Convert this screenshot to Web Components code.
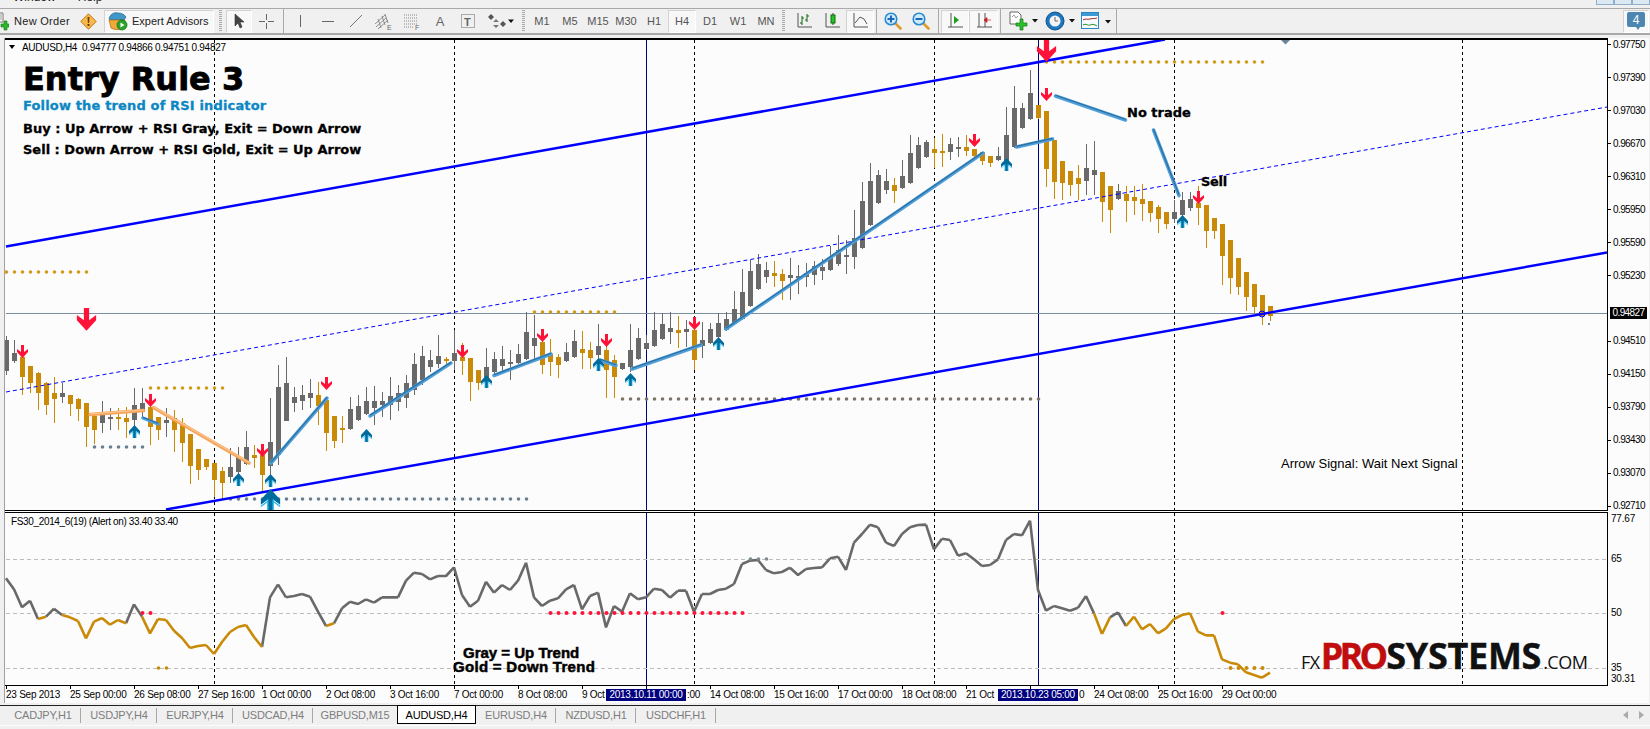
<!DOCTYPE html>
<html>
<head>
<meta charset="utf-8">
<title>AUDUSD,H4</title>
<style>
    html, body { margin: 0; padding: 0; height: 100%; overflow: hidden; background: #f0f0f0; }
</style>
</head>
<body>
<mt-app>
    <menu-strip></menu-strip>
    <tool-bar>
        <tool-btn style="width:76px;justify-content:flex-start;color:#222;letter-spacing:.3px">
            <svg width="12" height="20" viewBox="0 0 12 20" style="margin-right:5px;margin-left:-3px"><path d="M0 2h6v9H0z" fill="#fff" stroke="#777"/><path d="M1 4h4M1 6h4M1 8h4" stroke="#999"/><path d="M4 13h3v-3h3v3h2v3h-2v3H7v-3H4z" fill="#2db52d" stroke="#137a13" stroke-width=".6"/></svg>New Order
        </tool-btn>
        <tool-btn style="width:24px">
            <svg width="17" height="17" viewBox="0 0 17 17"><path d="M8.500 .8 16.200 8.500 8.500 16.200 .8 8.500z" fill="#f8b84a" stroke="#b97a12"/><path d="M7.500 4h2l-.4 6H7.900z" fill="#6a3c00"/><rect x="7.500" y="11" width="2" height="2" fill="#6a3c00"/></svg>
        </tool-btn>
        <tool-gap style="width:4px"></tool-gap>
        <tool-btn pressed style="width:110px;justify-content:flex-start;padding-left:3px;color:#222">
            <svg width="20" height="20" viewBox="0 0 20 20" style="margin-right:4px"><path d="M1 8c1-5 5-7 9-6 3 0 6 1 8 4l-2 3H3z" fill="#3f97c9" stroke="#1c628d" stroke-width=".7"/><path d="M1 9h16l-2 8c-3 2-9 2-12 0z" fill="#f3a93a" stroke="#a86c11" stroke-width=".7"/><circle cx="14" cy="14" r="5" fill="#2aa52a" stroke="#0f6d0f" stroke-width=".7"/><path d="M12.500 11.500v5l4-2.500z" fill="#fff"/></svg>Expert Advisors
        </tool-btn>
        <tool-gap style="width:4px"></tool-gap><tool-grip></tool-grip><tool-gap style="width:2px"></tool-gap>
        <tool-btn pressed style="width:26px"><svg width="12" height="17" viewBox="0 0 12 17"><path d="M2 1v12l3-3 2 5 2-1-2-5h4z" fill="#444" stroke="#333" stroke-width=".6"/></svg></tool-btn>
        <tool-btn style="width:28px"><svg width="17" height="17" viewBox="0 0 17 17"><path d="M8.500 1v6M8.500 10v6M1 8.500h6M10 8.500h6" stroke="#666"/></svg></tool-btn>
        <tool-sep style="width:6px"></tool-sep>
        <tool-btn style="width:28px"><svg width="16" height="16" viewBox="0 0 16 16"><path d="M8.500 2v12" stroke="#666"/></svg></tool-btn>
        <tool-btn style="width:28px"><svg width="16" height="16" viewBox="0 0 16 16"><path d="M2 8.500h12" stroke="#666"/></svg></tool-btn>
        <tool-btn style="width:28px"><svg width="16" height="16" viewBox="0 0 16 16"><path d="M2 14 14 2" stroke="#777"/></svg></tool-btn>
        <tool-btn style="width:28px"><svg width="20" height="19" viewBox="0 0 20 19"><path d="M1 12 11 3M2 15 12 6M4 17 14 8M4 7l3 9M8 4l3 9M11 2l3 9" stroke="#777" stroke-width=".8" fill="none"/><text x="13" y="18" font-family="Liberation Sans" font-size="7" fill="#666">E</text></svg></tool-btn>
        <tool-btn style="width:28px"><svg width="20" height="19" viewBox="0 0 20 19"><path d="M2 3h13M2 6h13M2 9h13M2 12h13M2 15h9" stroke="#888" stroke-dasharray="1 1"/><text x="13" y="18" font-family="Liberation Sans" font-size="7" fill="#666">F</text></svg></tool-btn>
        <tool-btn style="width:28px;font-size:13px;color:#666">A</tool-btn>
        <tool-btn style="width:28px"><svg width="16" height="16" viewBox="0 0 16 16"><rect x="1.500" y="1.500" width="13" height="13" fill="none" stroke="#666" stroke-dasharray="1 1"/><text x="4" y="12.500" font-family="Liberation Sans" font-size="11" font-weight="bold" fill="#666">T</text></svg></tool-btn>
        <tool-btn style="width:36px;justify-content:flex-start;padding-left:6px"><svg width="26" height="16" viewBox="0 0 26 16"><path d="M3 1 6 4 3 7 0 4z" fill="#555"/><path d="M5 9l3-3 3 3zM8 15 5 12h6z" fill="#777"/><path d="M12 11l3 3 3-3-3-3z" fill="#555"/><path d="M20 6.500h6L23 10z" fill="#111"/></svg></tool-btn>
        <tool-gap style="width:3px"></tool-gap><tool-grip></tool-grip><tool-gap style="width:1px"></tool-gap>
        <tool-btn style="width:28px">M1</tool-btn>
        <tool-btn style="width:28px">M5</tool-btn>
        <tool-btn style="width:28px">M15</tool-btn>
        <tool-btn style="width:28px">M30</tool-btn>
        <tool-btn style="width:28px">H1</tool-btn>
        <tool-btn pressed style="width:28px">H4</tool-btn>
        <tool-btn style="width:28px">D1</tool-btn>
        <tool-btn style="width:28px">W1</tool-btn>
        <tool-btn style="width:28px">MN</tool-btn>
        <tool-gap style="width:1px"></tool-gap><tool-grip></tool-grip><tool-gap style="width:3px"></tool-gap>
        <tool-btn style="width:28px"><svg width="18" height="18" viewBox="0 0 18 18"><path d="M3 1v14h14" fill="none" stroke="#555"/><path d="M7 4v9M5 11h2M7 6h2M12 2v8M10 8h2M12 4h2" stroke="#116611" fill="none"/></svg></tool-btn>
        <tool-btn style="width:28px"><svg width="18" height="18" viewBox="0 0 18 18"><path d="M3 1v14h14" fill="none" stroke="#555"/><path d="M10 1v12" stroke="#333"/><rect x="8" y="3" width="4" height="8" fill="#24c424" stroke="#0c6a0c"/></svg></tool-btn>
        <tool-btn pressed style="width:28px"><svg width="18" height="18" viewBox="0 0 18 18"><path d="M3 1v14h14" fill="none" stroke="#555"/><path d="M4 11 9 5l4 2 3 5" fill="none" stroke="#555"/></svg></tool-btn>
        <tool-sep style="width:5px"></tool-sep>
        <tool-btn style="width:28px"><mag-icon></mag-icon></tool-btn>
        <tool-btn style="width:28px"><mag-icon minus></mag-icon></tool-btn>
        <tool-sep style="width:6px"></tool-sep>
        <tool-btn pressed style="width:28px"><svg width="18" height="18" viewBox="0 0 18 18"><path d="M5 1v14h12M2 15h3" fill="none" stroke="#555"/><path d="M8 4v8l5-4z" fill="#1ea01e"/></svg></tool-btn>
        <tool-btn pressed style="width:29px"><svg width="18" height="18" viewBox="0 0 18 18"><path d="M4 1v14h13M2 15h2M10 1v14" fill="none" stroke="#555"/><path d="M16 8H12M12 5.500v5l-3-2.500z" fill="#c81e1e" stroke="#c81e1e" stroke-width=".7"/></svg></tool-btn>
        <tool-sep style="width:5px"></tool-sep>
        <tool-btn style="width:37px;justify-content:flex-start;padding-left:6px"><svg width="30" height="20" viewBox="0 0 30 20"><path d="M1 1h8l3 3v9H1z" fill="#fff" stroke="#666"/><path d="M3 6l2-2 2 3 2-2" fill="none" stroke="#999"/><path d="M7 12h4V8h3v4h4v3h-4v4h-3v-4H7z" fill="#2dc12d" stroke="#0f7a0f" stroke-width=".7"/><path d="M23 8h6l-3 3.500z" fill="#111"/></svg></tool-btn>
        <tool-btn style="width:37px;justify-content:flex-start;padding-left:5px"><svg width="31" height="20" viewBox="0 0 31 20"><circle cx="10" cy="10" r="9" fill="#1f78bf" stroke="#0d4f86"/><circle cx="10" cy="10" r="5.500" fill="#f4f4f4"/><path d="M10 6v4h3" fill="none" stroke="#666"/><path d="M24 8h6l-3 3.500z" fill="#111"/></svg></tool-btn>
        <tool-btn style="width:36px;justify-content:flex-start;padding-left:4px"><svg width="32" height="18" viewBox="0 0 32 18"><rect x=".5" y=".5" width="17" height="16" fill="#f7fbff" stroke="#2a85c0"/><rect x="1" y="1" width="16" height="3" fill="#3d9ad2"/><path d="M2 8c3-2 4 0 7-1s4 0 7-1" fill="none" stroke="#a32a1c"/><path d="M2 13c3-2 5 1 7 0s4-1 7 1" fill="none" stroke="#1f8c1f"/><path d="M24 8h6l-3 3.500z" fill="#111"/></svg></tool-btn>
        <tool-sep style="width:6px"></tool-sep>
        <tool-gap style="flex:1"></tool-gap>
        <tool-btn pressed style="width:26px"><svg width="20" height="20" viewBox="0 0 20 20"><path d="M3 1h14a2 2 0 0 1 2 2v11a2 2 0 0 1-2 2h-3l-2 3-2-3H3a2 2 0 0 1-2-2V3a2 2 0 0 1 2-2z" fill="#4d86b0"/><text x="10" y="13" text-anchor="middle" font-family="Liberation Sans" font-size="12" fill="#fff">4</text></svg></tool-btn>
        <tool-gap style="width:1px"></tool-gap>
    </tool-bar>
    <chart-window>
        <price-pane slot="main">
            <chart-note style="left:17px;top:2px;font:10px 'Liberation Sans',sans-serif;letter-spacing:-.3px">AUDUSD,H4&nbsp; 0.94777 0.94866 0.94751 0.94827</chart-note>
            <chart-note style="left:18px;top:20px;font:bold 32px 'DejaVu Sans',sans-serif;-webkit-text-stroke:.8px #000">Entry Rule 3</chart-note>
            <chart-note style="left:18px;top:58px;font:bold 13px 'DejaVu Sans',sans-serif;color:#0c87c4;-webkit-text-stroke:.3px #0c87c4;letter-spacing:.15px">Follow the trend of RSI indicator</chart-note>
            <chart-note style="left:18px;top:81px;font:bold 13px 'DejaVu Sans',sans-serif;-webkit-text-stroke:.3px #000">Buy : Up Arrow + RSI Gray, Exit = Down Arrow</chart-note>
            <chart-note style="left:18px;top:102px;font:bold 13px 'DejaVu Sans',sans-serif;-webkit-text-stroke:.3px #000">Sell : Down Arrow + RSI Gold, Exit = Up Arrow</chart-note>
            <chart-note style="left:1122px;top:65px;font:bold 13px 'DejaVu Sans',sans-serif;-webkit-text-stroke:.3px #000">No trade</chart-note>
            <chart-note style="left:1196px;top:134px;font:bold 13px 'DejaVu Sans',sans-serif;-webkit-text-stroke:.3px #000;letter-spacing:-.3px">Sell</chart-note>
            <chart-note style="left:1276px;top:416px;font:13px 'Liberation Sans',sans-serif">Arrow Signal: Wait Next Signal</chart-note>
        </price-pane>
        <price-axis slot="main-axis"></price-axis>
        <indicator-pane slot="sub">
            <chart-note style="left:6px;top:3px;font:10px 'Liberation Sans',sans-serif;letter-spacing:-.35px">FS30_2014_6(19) (Alert on) 33.40 33.40</chart-note>
            <chart-note style="left:458px;top:131px;font:bold 15px 'Liberation Sans',sans-serif;-webkit-text-stroke:.5px #000">Gray = Up Trend</chart-note>
            <chart-note style="left:448px;top:145px;font:bold 15px 'Liberation Sans',sans-serif;-webkit-text-stroke:.5px #000;letter-spacing:.3px">Gold = Down Trend</chart-note>
            <fx-logo></fx-logo>
        </indicator-pane>
        <indicator-axis slot="sub-axis"></indicator-axis>
        <time-axis slot="time"></time-axis>
    </chart-window>
    <chart-tabs>
        <chart-tab style="width:76px">CADJPY,H1</chart-tab>
        <chart-tab style="width:76px">USDJPY,H4</chart-tab>
        <chart-tab style="width:76px">EURJPY,H4</chart-tab>
        <chart-tab style="width:80px">USDCAD,H4</chart-tab>
        <chart-tab style="width:84px" last>GBPUSD,M15</chart-tab>
        <chart-tab style="width:79px" active>AUDUSD,H4</chart-tab>
        <chart-tab style="width:80px">EURUSD,H4</chart-tab>
        <chart-tab style="width:80px">NZDUSD,H1</chart-tab>
        <chart-tab style="width:80px">USDCHF,H1</chart-tab>
    </chart-tabs>
</mt-app>

<script>
// page coordinates are used for all chart data, each svg viewBox maps them back
const GRAY = '#696969', GOLD = '#c98a08', RED = '#ff1238', TEAL = '#006c9e';

// [colour, body top, body bottom, high, low], one per bar, bar k sits at x = 6 + 8k
const BARS = `g340,371,336,375 g353,361,340,363 o357,377,355,395 o366,383,366,393 o373,393,372,410 o383,405,382,415
o393,399,377,423 g393,397,383,403 o395,404,395,416 o399,409,398,421 o403,427,403,447 o416,430,414,444
g415,423,401,433 g417,419,408,430 o417,419,408,430 o418,422,407,438 g405,420,388,430 g403,412,388,418
o407,427,402,445 o417,430,417,440 g420,423,408,437 o418,430,410,452 o423,443,418,462 o434,466,434,484
o449,470,449,480 o459,467,459,470 o463,480,463,497 o471,483,467,500 g467,477,448,483 g457,472,447,483
g447,464,431,465 o455,458,445,468 o455,475,445,492 g442,466,398,483 g387,455,365,465 g383,421,357,421
g397,403,387,412 g395,401,385,410 g393,398,379,408 o395,406,382,425 o400,433,398,451 o416,441,416,448
o428,429,416,443 g409,429,397,430 g406,420,395,421 g401,414,387,415 g401,408,386,425 g401,405,392,417
g396,405,377,420 g393,402,385,411 g383,398,375,408 g364,390,353,395 g356,380,346,385 g360,367,350,372
g356,364,335,368 o359,361,357,366 g353,361,330,370 o357,361,343,375 o358,382,358,401 o370,383,370,390
g367,382,348,387 g359,372,352,375 g359,366,346,372 g362,363,350,380 g354,363,344,364 g332,359,312,360
g338,346,315,359 o342,365,337,374 o354,362,339,376 o357,365,354,378 g352,361,343,362 g341,357,330,358
o349,353,331,369 o350,358,342,369 g346,355,324,371 o350,370,338,398 o360,377,355,398 g363,369,363,370
g350,367,324,372 g338,359,328,360 g343,349,335,350 g330,346,312,347 g324,339,313,340 g328,332,312,344
o330,333,316,348 g329,332,320,347 o330,360,320,370 g340,346,322,358 g329,343,323,344 g323,337,313,345
g319,330,312,331 g309,324,291,325 g292,319,269,320 g271,306,260,307 g264,289,254,290 g270,277,262,283
o273,276,261,287 o274,281,269,300 g275,278,258,300 g276,277,265,294 g273,277,263,287 g266,275,261,285
g267,271,259,280 g257,270,246,271 g250,264,235,266 g255,257,240,274 g238,257,210,269 g201,248,182,249
g181,225,163,226 g175,203,170,204 g181,190,169,194 o185,191,178,203 g176,188,160,189 g153,183,135,184
g145,168,137,169 g142,157,140,158 o149,153,138,168 o151,152,134,167 g144,152,138,160 g147,148,137,157
o147,151,135,156 o149,156,149,159 o152,161,152,165 o156,163,156,167 g156,160,147,161 g135,165,107,170
g108,147,86,148 g108,128,103,129 g93,119,70,120 o105,118,105,119 o111,169,111,187 o140,182,140,199
o161,183,161,200 o171,185,171,196 o178,184,165,200 g168,181,144,195 g170,175,141,195 o172,202,172,222
o186,210,186,233 g191,199,184,200 o194,201,186,222 o197,201,186,215 o199,204,184,221 o201,213,201,222
o207,219,205,233 o212,224,212,229 g212,219,200,223 g200,215,192,216 g199,208,192,211 o203,208,186,225
o205,231,205,248 o218,231,218,239 o224,256,224,285 o240,278,240,294 o258,287,258,295 o272,297,272,311
o284,307,284,313 o295,316,295,325 o306,316,306,321`.trim().split(/\s+/).map(s => {
    const [t, b, h, l] = s.slice(1).split(',').map(Number);
    return { col: s[0] === 'g' ? GRAY : GOLD, t, b, h, l };
});

// FS30 values as read off the pane, y = 510 + v / 3
const FS = [205,238,292,272,327,320,296,315,322,333,385,335,324,344,330,340,283,320,370,327,330,362,384,414,408,405,432,396,366,351,345,381,411,
    262,223,262,258,252,260,305,348,340,295,275,282,268,278,262,262,262,212,188,192,208,198,198,172,255,290,272,215,248,225,240,212,158,
    262,288,272,265,238,225,298,258,248,352,288,305,250,268,262,236,240,263,242,242,305,252,252,240,236,222,162,152,150,180,190,186,173,195,177,174,172,145,140,180,98,72,44,52,98,108,72,52,45,44,118,86,90,137,130,148,168,165,148,90,72,76,32,240,
    302,288,295,302,293,258,310,372,322,307,348,320,358,342,370,355,327,315,310,365,376,376,448,458,463,487,495,503,488];
const FS_GOLD = [[4,5],[7,15],[17,32],[40,41],[136,138],[140,158]];

const barX = k => 6 + 8 * k;
const seg = (x1, y1, x2, y2, col, w, extra = '') => `<line x1="${x1}" y1="${y1}" x2="${x2}" y2="${y2}" stroke="${col}" stroke-width="${w}" ${extra}/>`;

function vLines(top, bottom) {
    let s = '';
    [214, 454, 694, 934, 1174, 1462].forEach(x => { s += seg(x + .5, top, x + .5, bottom, '#000', 1, 'stroke-dasharray="3 3"'); });
    [646, 1038].forEach(x => { s += seg(x + .5, top, x + .5, bottom, '#000080', 1); });
    return s;
}

function dots(from, to, y, col, r = 1.8) {
    let s = '';
    for (let x = from; x <= to; x += 8) s += `<circle cx="${x + .5}" cy="${y}" r="${r}" fill="${col}"/>`;
    return s;
}

// wingdings style arrow, cx/top in page px
function arrow(cx, top, down, col, k = 1, tail = '') {
    const pts = '-5.500,4 -1.500,7 -1.500,0 1.500,0 1.500,7 5.500,4 5.500,7 0,13 -5.500,7';
    const tf = down ? `translate(${cx + .5} ${top}) scale(${k})` : `translate(${cx + .5} ${top + 13 * k}) scale(${k} ${-k})`;
    return `<g transform="${tf}"><polygon points="${pts}" fill="${col}"/>${tail}</g>`;
}
const upTail = '<path d="M-1.500 0v7M1.500 0v7" stroke="#22b6e6" stroke-width=".8"/><path d="M-5.500 4l4 3M5.500 4l-4 3" stroke="#22b6e6" stroke-width=".7" transform="translate(0 -1)"/>';

function trend(x1, y1, x2, y2, col = '#4f9fdb', dark = '#2b6f9e') {
    return seg(x1, y1, x2, y2, col, 3.500, 'stroke-linecap="round"') + seg(x1, y1 - .7, x2, y2 - .7, dark, 1.200);
}

class MtApp extends HTMLElement {
    constructor() {
        super();
        this.attachShadow({ mode: 'open' }).innerHTML = `
            <style>
                :host { display: flex; flex-direction: column; width: 1650px; height: 729px; overflow: hidden;
                    background: #f0f0f0; font-family: 'Liberation Sans', sans-serif; }
            </style>
            <slot></slot>`;
    }
}

class MenuStrip extends HTMLElement {
    constructor() {
        super();
        this.attachShadow({ mode: 'open' }).innerHTML = `
            <style>
                :host { display: flex; flex: none; height: 8px; overflow: hidden; position: relative; background: #f0f0f0; }
                div { display: flex; gap: 22px; margin: -10px 0 0 13px; font: 12px/14px 'Liberation Sans', sans-serif; color: #222; }
                .win { position: absolute; right: 0; top: -5px; display: flex; }
                .win i { width: 18px; height: 10px; box-sizing: border-box; border: 1px solid #8fb0cc; background: #dce8f2; }
            </style>
            <div><span>Window</span><span>Help</span></div>
            <span class="win"><i></i><i></i><i></i></span>`;
    }
}

class ToolBar extends HTMLElement {
    constructor() {
        super();
        this.attachShadow({ mode: 'open' }).innerHTML = `
            <style>
                :host { display: flex; flex: none; align-items: center; height: 24px; margin-bottom: 3px; background: #f0f0f0;
                    border-top: 1px solid #a9a9a9; border-bottom: 2px solid #a9a9a9; }
            </style>
            <slot></slot>`;
    }
}

class ToolBtn extends HTMLElement {
    constructor() {
        super();
        this.attachShadow({ mode: 'open' }).innerHTML = `
            <style>
                :host { display: flex; flex: none; align-items: center; justify-content: center; box-sizing: border-box; height: 23px;
                    font: 11px 'Liberation Sans', sans-serif; color: #555; white-space: nowrap; }
                :host([pressed]) { background: #f8f8f8; border: 1px solid #d2d2d2; border-right-color: #fff; border-bottom-color: #fff; }
            </style>
            <slot></slot>`;
    }
}

class ToolGap extends HTMLElement {
    constructor() {
        super();
        this.attachShadow({ mode: 'open' }).innerHTML = `<style>:host { display: block; flex: none; }</style>`;
    }
}

class ToolSep extends HTMLElement {
    constructor() {
        super();
        this.attachShadow({ mode: 'open' }).innerHTML = `
            <style>
                :host { display: flex; flex: none; justify-content: center; height: 24px; }
                i { width: 1px; background: #a9a9a9; }
            </style><i></i>`;
    }
}

class ToolGrip extends HTMLElement {
    constructor() {
        super();
        this.attachShadow({ mode: 'open' }).innerHTML = `
            <style>
                :host { display: block; flex: none; width: 6px; height: 22px;
                    background: repeating-linear-gradient(to bottom, #a9a9a9 0 1px, transparent 1px 2px) 1px 0 / 3px 100% no-repeat; }
            </style>`;
    }
}

class MagIcon extends HTMLElement {
    constructor() {
        super();
        const sign = this.hasAttribute('minus') ? '' : '<path d="M7 3.500v7" stroke="#1668c0" stroke-width="2"/>';
        this.attachShadow({ mode: 'open' }).innerHTML = `
            <style>:host { display: block; width: 18px; height: 18px; } svg { display: block; }</style>
            <svg width="18" height="18" viewBox="0 0 18 18">
                <path d="M11 11l5.500 5.500" stroke="#e09a2c" stroke-width="2.600" stroke-linecap="round"/>
                <circle cx="7" cy="7" r="5.800" fill="#cfeafa" stroke="#2a8bd0" stroke-width="1.600"/>
                <path d="M3.500 7h7" stroke="#1668c0" stroke-width="2"/>${sign}
            </svg>`;
    }
}

class ChartWindow extends HTMLElement {
    constructor() {
        super();
        this.attachShadow({ mode: 'open' }).innerHTML = `
            <style>
                :host { display: grid; flex: none; margin: 0 1px 2px 4px; background: #fcfcfc; border-left: 1px solid #a0a0a0;
                    grid-template-columns: 1603px 1fr; grid-template-rows: 473px 174px 16px; row-gap: 1px; }
                ::slotted([slot="time"]) { grid-column: 1 / 3; margin-top: -1px; }
            </style>
            <slot name="main"></slot><slot name="main-axis"></slot>
            <slot name="sub"></slot><slot name="sub-axis"></slot>
            <slot name="time"></slot>`;
    }
}

class PricePane extends HTMLElement {
    constructor() {
        super();
        let s = vLines(40, 510);

        s += seg(6, 313.500, 1607, 313.500, '#7a8ea0', 1);
        s += dots(6, 86, 272, '#d29a18') + dots(150, 222, 388, '#d29a18') + dots(534, 614, 312, '#d29a18') + dots(1046, 1262, 62, '#d29a18');
        s += dots(94, 142, 447, '#6b7f8e') + dots(230, 526, 499, '#6b7f8e') + dots(622, 1038, 399, '#7b7468');
        s += `<path d="M1281 40h9l-4.500 4.500z" fill="#6b8497"/>`;

        // candles
        BARS.forEach((b, k) => {
            const x = barX(k);
            s += `<rect x="${x}" y="${b.h}" width="1" height="${b.l - b.h}" fill="${b.col}" shape-rendering="crispEdges"/>`;
            s += `<rect x="${x - 2}" y="${b.t}" width="5" height="${Math.max(b.b - b.t, 2)}" fill="${b.col}" shape-rendering="crispEdges"/>`;
        });

        // regression channel
        s += seg(6, 246.500, 1165, 39.500, '#0000ff', 2.500);
        s += seg(166, 509.500, 1607, 252.500, '#0000ff', 2.500);
        s += seg(6, 392, 1607, 107, '#0000ff', 1, 'stroke-dasharray="4 3"');
        s += `<circle cx="1262" cy="314" r="3" fill="none" stroke="#0000ff"/><rect x="1268" y="323" width="2" height="2" fill="#6b7f8e"/>`;

        // hand drawn trend lines
        s += trend(90, 414.500, 143.500, 410.500, '#f6a55a', '#fbc58f') + trend(153.500, 407.500, 249, 463, '#f6a55a', '#fbc58f');
        [[143, 418, 158, 424], [271, 463, 327, 398], [370, 416, 451, 363], [494, 375.500, 551, 354], [600, 360, 616, 365.500],
            [632, 369, 701, 345], [726, 329, 983, 153], [1016.500, 147, 1052.500, 139], [1055.500, 96, 1125.500, 120], [1153.500, 130, 1179, 195.500]]
            .forEach(t => { s += trend(...t); });

        // signals
        [[22, 345], [150, 394], [262, 444], [326, 377], [462, 345], [542, 329], [606, 334], [694, 317], [974, 134], [1046, 88], [1198, 191]]
            .forEach(([x, y]) => { s += arrow(x, y, true, RED); });
        s += arrow(86, 308, true, RED, 1.750) + arrow(1046, 39, true, RED, 1.750);
        [[134, 425], [238, 473], [270, 474], [366, 429], [486, 375], [598, 358], [630, 373], [718, 337], [1006, 158], [1182, 215]]
            .forEach(([x, y]) => { s += arrow(x, y, false, TEAL, 1, upTail); });
        s += arrow(270, 489, false, TEAL, 1.750, upTail);

        this.attachShadow({ mode: 'open' }).innerHTML = `
            <style>
                :host { display: block; position: relative; box-sizing: border-box; overflow: hidden; background: #fcfcfc; font-size: 10px;
                    border-top: 2px solid #000; border-bottom: 1px solid #000; border-right: 1px solid #000; }
                svg { display: block; }
                .tri { position: absolute; left: 4px; top: 5px; width: 0; height: 0; border: 3.500px solid transparent; border-top: 4px solid #000; border-bottom: 0; }
            </style>
            <svg width="1602" height="470" viewBox="5 40 1602 470">${s}</svg>
            <i class="tri"></i>
            <slot></slot>`;
    }
}

class IndicatorPane extends HTMLElement {
    constructor() {
        super();
        let s = vLines(513, 685);
        [559.500, 613.500, 668.500].forEach(y => { s += seg(6, y, 1607, y, '#bdbdbd', 1, 'stroke-dasharray="4 3"'); });

        const isGold = k => FS_GOLD.some(([a, b]) => k >= a && k < b);
        let gray = '', gold = '';
        for (let k = 0; k < FS.length - 1; k++) {
            const p = `M${barX(k)} ${510 + FS[k] / 3}L${barX(k + 1)} ${510 + FS[k + 1] / 3}`;
            if (isGold(k)) gold += p; else gray += p;
        }
        s += `<path d="${gray}" fill="none" stroke="${GRAY}" stroke-width="2.600" stroke-linejoin="round"/>`;
        s += `<path d="${gold}" fill="none" stroke="${GOLD}" stroke-width="2.600" stroke-linejoin="round"/>`;

        s += dots(142, 150, 613, '#ff1238', 2) + dots(550, 742, 613, '#ff1238', 2) + dots(1222, 1222, 613, '#ff1238', 2);
        s += dots(750, 766, 559, '#7d8a90') + dots(158, 166, 668, GOLD) + dots(1230, 1262, 668, GOLD, 2);

        this.attachShadow({ mode: 'open' }).innerHTML = `
            <style>
                :host { display: block; position: relative; box-sizing: border-box; overflow: hidden; background: #fcfcfc; font-size: 10px;
                    border-top: 1px solid #000; border-bottom: 1px solid #000; border-right: 1px solid #000; }
                svg { display: block; }
            </style>
            <svg width="1602" height="172" viewBox="5 513 1602 172">${s}</svg>
            <slot></slot>`;
    }
}

class ChartNote extends HTMLElement {
    constructor() {
        super();
        this.attachShadow({ mode: 'open' }).innerHTML = `
            <style>:host { position: absolute; white-space: nowrap; color: #000; line-height: 1.2; }</style>
            <slot></slot>`;
    }
}

class FxLogo extends HTMLElement {
    constructor() {
        super();
        this.attachShadow({ mode: 'open' }).innerHTML = `
            <style>
                :host { position: absolute; left: 1296px; top: 123px; display: flex; align-items: baseline; color: #111;
                    font-family: 'Open Sans', sans-serif; white-space: nowrap; line-height: 40px; }
                .fx, .com { font-size: 18px; font-weight: 400; letter-spacing: -.5px; }
                .big { font-size: 36px; font-weight: 700; letter-spacing: -.3px; -webkit-text-stroke: .4px #111; }
                .pro { color: #c00d0d; margin-left: 1px; letter-spacing: -3.800px; -webkit-text-stroke: .4px #c00d0d; margin-right: 2px; }
                .com { margin-left: 2px; }
            </style>
            <span class="fx">FX</span><span class="big pro">PRO</span><span class="big">SYSTEMS</span><span class="com">.COM</span>`;
    }
}

class PriceAxis extends HTMLElement {
    constructor() {
        super();
        const labels = ['0.97750', '0.97390', '0.97030', '0.96670', '0.96310', '0.95950', '0.95590', '0.95230', '0.94870',
            '0.94510', '0.94150', '0.93790', '0.93430', '0.93070', '0.92710'];
        const rows = labels.map(l => `<div class="row${l === '0.94870' ? ' hid' : ''}"><i></i><span>${l === '0.94870' ? '' : l}</span></div>`).join('');
        this.attachShadow({ mode: 'open' }).innerHTML = `
            <style>
                :host { display: flex; flex-direction: column; position: relative; overflow: hidden; background: #fcfcfc;
                    font: 10px/10px 'Liberation Sans', sans-serif; letter-spacing: -.6px; color: #000; }
                .row { display: flex; flex: none; align-items: center; height: 32.950px; gap: 2px; }
                .row:first-of-type { margin-top: -9.500px; }
                i { width: 3px; height: 1px; background: #000; }
                .hid i { background: none; }
                .tag { position: absolute; left: 2px; top: 269px; width: 37px; height: 12px; line-height: 12px; text-align: center; background: #000; color: #fff; }
            </style>
            ${rows}
            <div class="tag">0.94827</div>`;
    }
}

class IndicatorAxis extends HTMLElement {
    constructor() {
        super();
        const rows = [['77.67', 1], ['65', 41], ['50', 95], ['35', 150], ['30.31', 161]];
        this.attachShadow({ mode: 'open' }).innerHTML = `
            <style>
                :host { display: block; position: relative; background: #fcfcfc; font: 10px 'Liberation Sans', sans-serif; letter-spacing: -.2px; color: #000; }
                span { position: absolute; left: 3px; line-height: 12px; }
            </style>
            ${rows.map(([t, y]) => `<span style="top:${y}px">${t}</span>`).join('')}`;
    }
}

class TimeAxis extends HTMLElement {
    constructor() {
        super();
        // the crosshair date boxes sit over parts of these labels, only the visible parts are kept
        const labels = ['23 Sep 2013', '25 Sep 00:00', '26 Sep 08:00', '27 Sep 16:00', '1 Oct 00:00', '2 Oct 08:00', '3 Oct 16:00', '7 Oct 00:00',
            '8 Oct 08:00', '9 Oct', '<b style="padding-left:41px">:00</b>', '14 Oct 08:00', '15 Oct 16:00', '17 Oct 00:00', '18 Oct 08:00', '21 Oct',
            '<b style="padding-left:49px">0</b>', '24 Oct 08:00', '25 Oct 16:00', '29 Oct 00:00'];
        this.attachShadow({ mode: 'open' }).innerHTML = `
            <style>
                :host { display: flex; position: relative; overflow: hidden; padding-left: 1px; background: #fcfcfc;
                    font: 10px 'Liberation Sans', sans-serif; letter-spacing: -.25px; color: #000; }
                div { flex: none; width: 64px; box-sizing: border-box; height: 100%; position: relative; padding: 3px 0 0 0; line-height: 11px; white-space: nowrap; }
                div::before { content: ''; position: absolute; left: 0; top: 0; width: 1px; height: 3px; background: #000; }
                b { font-weight: 400; }
                .sel { position: absolute; top: 3px; width: 80px; height: 12px; line-height: 12px; text-align: center; background: #000080; color: #fff; }
            </style>
            ${labels.map(l => `<div>${l}</div>`).join('')}
            <span class="sel" style="left:601px">2013.10.11 00:00</span>
            <span class="sel" style="left:993px">2013.10.23 05:00</span>`;
    }
}

class ChartTabs extends HTMLElement {
    constructor() {
        super();
        this.attachShadow({ mode: 'open' }).innerHTML = `
            <style>
                :host { display: flex; flex: none; position: relative; height: 19px; padding-left: 5px; background: #f0f0f0;
                    border-top: 1px solid #222; border-bottom: 1px solid #fbfbfb; }
                .nav { position: absolute; right: 6px; top: 5px; display: flex; gap: 11px; }
                .nav i { width: 0; height: 0; border: 4px solid transparent; }
                .nav i:first-child { border-right: 5px solid #aaa; border-left: 0; }
                .nav i:last-child { border-left: 5px solid #aaa; border-right: 0; }
            </style>
            <slot></slot>
            <span class="nav"><i></i><i></i></span>`;
    }
}

class ChartTab extends HTMLElement {
    constructor() {
        super();
        this.attachShadow({ mode: 'open' }).innerHTML = `
            <style>
                :host { display: flex; flex: none; align-items: center; justify-content: center; box-sizing: border-box; height: 18px; margin-top: 0;
                    font: 11px 'Liberation Sans', sans-serif; letter-spacing: -.2px; color: #7d7d7d; white-space: nowrap; position: relative; }
                :host(:not([active]):not([last]))::after { content: ''; position: absolute; right: 0; top: 2px; bottom: 1px; width: 1px; background: #a8a8a8; }
                :host([active]) { background: #fff; color: #000; height: 19px; margin-top: -1px; border: 1px solid #000; border-top-color: #000; }
            </style>
            <slot></slot>`;
    }
}

customElements.define('mt-app', MtApp);
customElements.define('menu-strip', MenuStrip);
customElements.define('tool-bar', ToolBar);
customElements.define('tool-btn', ToolBtn);
customElements.define('tool-gap', ToolGap);
customElements.define('tool-sep', ToolSep);
customElements.define('tool-grip', ToolGrip);
customElements.define('mag-icon', MagIcon);
customElements.define('chart-window', ChartWindow);
customElements.define('price-pane', PricePane);
customElements.define('indicator-pane', IndicatorPane);
customElements.define('chart-note', ChartNote);
customElements.define('fx-logo', FxLogo);
customElements.define('price-axis', PriceAxis);
customElements.define('indicator-axis', IndicatorAxis);
customElements.define('time-axis', TimeAxis);
customElements.define('chart-tabs', ChartTabs);
customElements.define('chart-tab', ChartTab);
</script>
</body>
</html>
